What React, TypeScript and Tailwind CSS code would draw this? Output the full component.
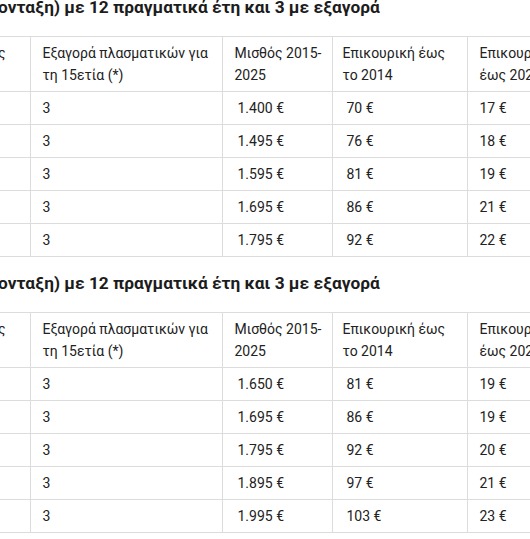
const tables = [
  {
    rows: [
      ["62", "3", "1.400 €", "70 €", "17 €"],
      ["63", "3", "1.495 €", "76 €", "18 €"],
      ["64", "3", "1.595 €", "81 €", "19 €"],
      ["65", "3", "1.695 €", "86 €", "21 €"],
      ["66", "3", "1.795 €", "92 €", "22 €"],
    ],
  },
  {
    rows: [
      ["62", "3", "1.650 €", "81 €", "19 €"],
      ["63", "3", "1.695 €", "86 €", "19 €"],
      ["64", "3", "1.795 €", "92 €", "20 €"],
      ["65", "3", "1.895 €", "97 €", "21 €"],
      ["66", "3", "1.995 €", "103 €", "23 €"],
    ],
  },
];

const cell = "border-r border-[#dcdcdc] align-top pl-3 pr-1";

function Heading() {
  return (
    <h2 className="relative ml-[-2px] whitespace-nowrap text-[17.3px] leading-6 font-bold text-[#1c1c1c]">
      <span className="absolute right-full">Παράδειγμα 2: 27 έτη (σ</span>
      ονταξη) με 12 πραγματικά έτη και 3 με εξαγορά
    </h2>
  );
}

function Table({ rows }: { rows: string[][] }) {
  return (
    <div className="ml-[-100px]">
      <table className="table-fixed border-collapse w-[682px] text-[14px] text-[#222]">
        <colgroup>
          <col className="w-[130px]" />
          <col className="w-[192px]" />
          <col className="w-[110px]" />
          <col className="w-[135px]" />
          <col className="w-[115px]" />
        </colgroup>
        <thead>
          <tr className="border-y border-[#dcdcdc] leading-[22px]">
            <th className={`${cell} font-normal text-right pr-[24px] py-[5px] whitespace-nowrap`}>Ηλικίας</th>
            <th className={`${cell} font-normal text-left py-[5px]`}>Εξαγορά πλασματικών για τη 15ετία (*)</th>
            <th className={`${cell} font-normal text-left py-[5px]`}>
              Μισθός 2015-
              <wbr />
              2025
            </th>
            <th className={`${cell} font-normal text-left py-[5px] pl-[10px]`}>Επικουρική έως το 2014</th>
            <th className={`${cell} font-normal text-left py-[5px]`}>Επικουρική έως 2025</th>
          </tr>
        </thead>
        <tbody>
          {rows.map((r, i) => (
            <tr key={i} className="border-b border-[#dcdcdc] h-[32.6px] leading-[22px]">
              <td className={`${cell} py-[5px]`}>{r[0]}</td>
              <td className={`${cell} py-[5px]`}>{r[1]}</td>
              <td className={`${cell} py-[5px] pl-[15px]`}>{r[2]}</td>
              <td className={`${cell} py-[5px] pl-[14px]`}>{r[3]}</td>
              <td className={`${cell} py-[5px]`}>{r[4]}</td>
            </tr>
          ))}
        </tbody>
      </table>
    </div>
  );
}

export default function App() {
  return (
    <div
      className="w-[530px] h-[539px] overflow-hidden bg-white"
      style={{ fontFamily: 'Roboto, "Noto Sans", sans-serif' }}
    >
      <div className="mt-[-5px]">
        <Heading />
        <div className="mt-[17px]">
          <Table rows={tables[0].rows} />
        </div>
        <div className="mt-[14px]">
          <Heading />
        </div>
        <div className="mt-[17px]">
          <Table rows={tables[1].rows} />
        </div>
      </div>
    </div>
  );
}
